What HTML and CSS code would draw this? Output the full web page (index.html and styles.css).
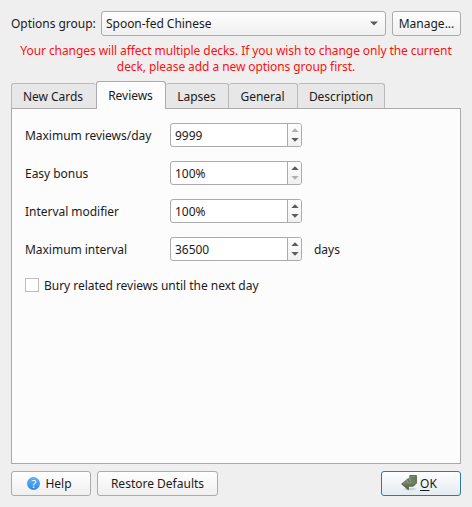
FILE: index.html
```html
<!DOCTYPE html>
<html lang="en">
<head>
<meta charset="utf-8">
<title>Deck options</title>
<link rel="stylesheet" href="styles.css">
</head>
<body>
<main class="dialog">
  <div class="group-row">
    <span class="group-label">Options group:</span>
    <div class="control combo"><span>Spoon-fed Chinese</span><svg class="chevron" width="8" height="5" viewBox="0 0 8 5"><path d="M0 0.5h8L4 4.5z"/></svg></div>
    <button class="control manage">Manage...</button>
  </div>
  <p class="warning">Your changes will affect multiple decks. If you wish to change only the current<br>deck, please add a new options group first.</p>
  <div class="tabs">
    <div class="tab tab-new">New Cards</div>
    <div class="tab tab-reviews active">Reviews</div>
    <div class="tab tab-lapses">Lapses</div>
    <div class="tab tab-general">General</div>
    <div class="tab tab-description">Description</div>
  </div>
  <section class="panel">
    <div class="field"><span class="name">Maximum reviews/day</span>
      <div class="spin"><span class="value">9999</span><span class="steps"><svg class="off" width="8" height="4" viewBox="0 0 8 4"><path d="M0.3 4L4 0.2L7.7 4z"/></svg><svg width="8" height="4" viewBox="0 0 8 4"><path d="M0.3 0L4 3.8L7.7 0z"/></svg></span></div></div>
    <div class="field"><span class="name">Easy bonus</span>
      <div class="spin"><span class="value">100%</span><span class="steps"><svg width="8" height="4" viewBox="0 0 8 4"><path d="M0.3 4L4 0.2L7.7 4z"/></svg><svg class="off" width="8" height="4" viewBox="0 0 8 4"><path d="M0.3 0L4 3.8L7.7 0z"/></svg></span></div></div>
    <div class="field"><span class="name">Interval modifier</span>
      <div class="spin"><span class="value">100%</span><span class="steps"><svg width="8" height="4" viewBox="0 0 8 4"><path d="M0.3 4L4 0.2L7.7 4z"/></svg><svg width="8" height="4" viewBox="0 0 8 4"><path d="M0.3 0L4 3.8L7.7 0z"/></svg></span></div></div>
    <div class="field"><span class="name">Maximum interval</span>
      <div class="spin"><span class="value">36500</span><span class="steps"><svg width="8" height="4" viewBox="0 0 8 4"><path d="M0.3 4L4 0.2L7.7 4z"/></svg><svg width="8" height="4" viewBox="0 0 8 4"><path d="M0.3 0L4 3.8L7.7 0z"/></svg></span></div><span class="unit">days</span></div>
    <div class="check"><span class="box"></span><span class="check-label">Bury related reviews until the next day</span></div>
  </section>
  <footer class="buttons">
    <button class="control help"><span class="help-icon">?</span>Help</button>
    <button class="control restore">Restore Defaults</button>
    <button class="control ok"><svg class="ok-icon" width="16" height="16" viewBox="0 0 16 16">
      <defs><linearGradient id="arrow" x1="0" y1="0" x2="0" y2="1"><stop offset="0" stop-color="#65735a"/><stop offset="0.5" stop-color="#738462"/><stop offset="1" stop-color="#4e6040"/></linearGradient></defs>
      <ellipse cx="9" cy="14" rx="6" ry="1.3" fill="#000" opacity="0.12"/>
      <path d="M8.8 0.6h6.6v7.6l-3 3H7.4v3.5L0.6 9l6.8-5.5v3.3h1.4z" fill="url(#arrow)" stroke="#46543a" stroke-width="0.8"/>
      <path d="M9.7 1.4h4.9M1.8 8.8l4.8-3.7v2.5h3.1V1.8" fill="none" stroke="#93a183" stroke-width="0.7"/>
    </svg><span class="ok-text"><span class="key">O</span>K</span></button>
  </footer>
</main>
</body>
</html>
```
FILE: styles.css
```css
* { box-sizing: border-box; }
body {
  margin: 0;
  background: #efefef;
  color: #1b1b1b;
  font: 12px/16px "Noto Sans", sans-serif;
  letter-spacing: -0.03px;
}
.dialog {
  display: flex;
  flex-direction: column;
  width: 472px;
  height: 507px;
  padding: 11px;
}
.group-row { display: flex; align-items: center; height: 25px; }
.group-label { width: 90px; }
.control {
  display: flex;
  align-items: center;
  justify-content: center;
  height: 25px;
  padding: 0;
  border: 1px solid #ababab;
  border-radius: 3px;
  background: linear-gradient(#fefefe, #f0f0f0);
  color: inherit;
  font: inherit;
}
.combo { width: 285px; margin-right: 6px; padding: 0 7px 0 4px; justify-content: space-between; }
.chevron { fill: #5c5c5c; }
.manage { width: 69px; }
.warning { margin: 7px 0 6px; color: #fb1111; letter-spacing: -0.077px; text-align: center; white-space: nowrap; }
.tabs { display: flex; align-items: flex-end; height: 27px; }
.tab {
  height: 25px;
  padding: 5px 1px 0 0;
  border: 1px solid #bababa;
  border-left-width: 0;
  border-bottom: 0;
  border-radius: 3px 3px 0 0;
  background: #e7e7e7;
  text-align: center;
}
.tab-new { width: 85px; border-left-width: 1px; border-right: 0; padding-right: 2px; }
.tab-reviews { width: 70px; }
.tab-lapses { width: 63px; }
.tab-general { width: 69px; }
.tab-description { width: 87px; padding-right: 0; }
.active {
  position: relative;
  height: 28px;
  margin-bottom: -1px;
  padding: 6px 1px 0 0;
  border-color: #ababab;
  border-left-width: 1px;
  background: #fcfcfc;
}
.panel {
  height: 356px;
  padding: 14px 13px;
  border: 1px solid #ababab;
  background: #fcfcfc;
}
.field { display: flex; align-items: center; height: 24px; margin-bottom: 14px; }
.name { width: 145px; padding-top: 2px; }
.spin {
  display: flex;
  width: 132px;
  height: 24px;
  border: 1px solid #ababab;
  border-radius: 3px;
  background: #fff;
  overflow: hidden;
}
.value { flex: 1; padding: 4px 0 0 4px; }
.steps {
  display: flex;
  flex-direction: column;
  align-items: center;
  justify-content: center;
  gap: 6px;
  width: 14px;
  border-left: 1px solid #ababab;
  background: linear-gradient(#fefefe, #f0f0f0);
}
.steps svg { display: block; fill: #5c5c5c; }
.steps .off { fill: #b1b1b1; }
.unit { margin-left: 12px; padding-top: 2px; }
.check { display: flex; align-items: center; gap: 5px; height: 16px; margin-top: 16px; }
.check-label { padding-top: 2px; }
.box { width: 14px; height: 14px; border: 1px solid #bcbcbc; background: #fff; }
.buttons { display: flex; gap: 6px; margin-top: 7px; }
.help { width: 80px; gap: 5px; padding-right: 3px; }
.help-icon {
  width: 13px;
  height: 13px;
  border-radius: 50%;
  background: linear-gradient(#62b1f6, #3288e6);
  color: #fff;
  font-size: 11px;
  line-height: 13px;
  text-align: center;
}
.restore { width: 121px; }
.ok { width: 80px; gap: 3px; margin-left: auto; padding-right: 4px; border-color: #3077a4; background: linear-gradient(#fdfefe, #e3ebf1); }
.ok-icon { margin-top: -2px; }
.key { text-decoration: underline; text-underline-offset: 2px; }
```
